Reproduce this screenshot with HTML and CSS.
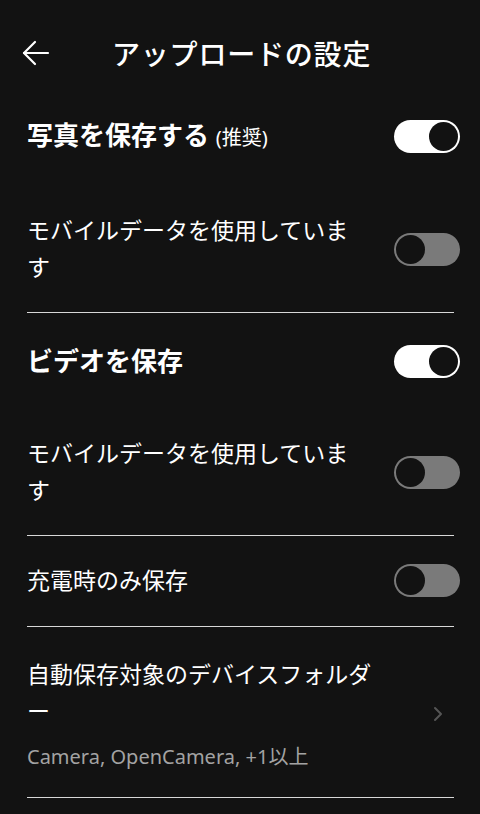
FILE: index.html
```html
<!DOCTYPE html>
<html lang="ja">
<head>
  <meta charset="UTF-8">
  <title>アップロードの設定</title>
  <link rel="stylesheet" href="styles.css">
</head>
<body>

  <header class="topbar">
    <button class="back" aria-label="戻る">
      <svg width="28" height="26" viewBox="0 0 28 26" fill="none" stroke="#fff" stroke-width="2.2" stroke-linecap="round" stroke-linejoin="round">
        <path d="M2 13 H26"/>
        <path d="M13 2 L2 13 L13 24"/>
      </svg>
    </button>
    <h1>アップロードの設定</h1>
  </header>

  <section class="group">
    <div class="row main">
      <div class="label">写真を保存する <small>(推奨)</small></div>
      <span class="switch on"><span class="knob"></span></span>
    </div>
    <div class="row sub">
      <div class="label">モバイルデータを使用しています</div>
      <span class="switch"><span class="knob"></span></span>
    </div>
  </section>

  <section class="group">
    <div class="row main">
      <div class="label">ビデオを保存</div>
      <span class="switch on"><span class="knob"></span></span>
    </div>
    <div class="row sub">
      <div class="label">モバイルデータを使用しています</div>
      <span class="switch"><span class="knob"></span></span>
    </div>
  </section>

  <section class="group">
    <div class="row single">
      <div class="label">充電時のみ保存</div>
      <span class="switch"><span class="knob"></span></span>
    </div>
  </section>

  <section class="group">
    <div class="row link">
      <div class="label">
        <div class="folder">自動保存対象のデバイスフォルダー</div>
        <div class="hint">Camera, OpenCamera, +1以上</div>
      </div>
      <svg class="chev" width="10" height="16" viewBox="0 0 10 16" fill="none" stroke="#555" stroke-width="2" stroke-linecap="round" stroke-linejoin="round">
        <path d="M2 2 L8 8 L2 14"/>
      </svg>
    </div>
  </section>

</body>
</html>
```

FILE: styles.css
```css
body {
  font-family: "Noto Sans", "Noto Sans CJK JP", sans-serif;
  background: #121212;
  color: #fff;
  margin: 0;
  padding: 0 26px 0 27px;
}

.topbar {
  display: flex;
  align-items: center;
  height: 70px;
  padding-top: 18px;
}

.back {
  background: none;
  border: none;
  padding: 0;
  margin-left: -5px;
  width: 90px;
  display: flex;
  align-items: center;
  cursor: pointer;
}

h1 {
  margin: 0;
  font-size: 28px;
  font-weight: 500;
  letter-spacing: 0.8px;
}

.group {
  border-bottom: 1px solid #d8d8d8;
}

.row {
  display: flex;
  align-items: center;
  justify-content: space-between;
}

.label {
  flex: 1;
  font-size: 23px;
  line-height: 37px;
}

.main {
  padding: 29px 0 20px;
}

.group:first-child .main,
.topbar + .group .main {
  padding-top: 28px;
}

.main .label {
  font-size: 26px;
  font-weight: 700;
  line-height: 38px;
}

.main small {
  font-size: 20px;
  font-weight: 400;
}

.sub {
  padding: 35px 0 26px;
}

.sub .label {
  max-width: 334px;
}

.single {
  padding: 26px 0 27px;
}

.link {
  padding: 29px 0 25px;
}

.folder {
  max-width: 358px;
}

.hint {
  margin-top: 12px;
  font-size: 20px;
  line-height: 30px;
  color: #a3a3a3;
}

.chev {
  margin-right: 11px;
}

.switch {
  display: flex;
  justify-content: flex-start;
  width: 66px;
  height: 33px;
  padding: 2px;
  box-sizing: border-box;
  border-radius: 17px;
  background: #7a7a7a;
  margin-right: -6px;
  margin-left: 30px;
}

.switch.on {
  background: #fff;
  justify-content: flex-end;
}

.knob {
  width: 29px;
  height: 29px;
  border-radius: 50%;
  background: #121212;
}
```
